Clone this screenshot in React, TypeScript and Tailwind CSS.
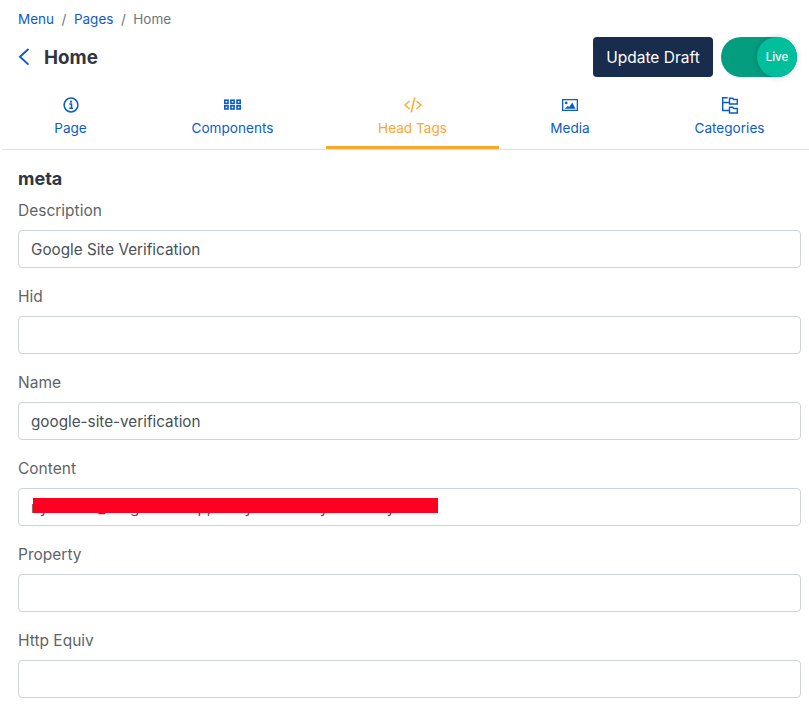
const blue = "text-[#0b5cc9]";

function BackIcon() {
  return (
    <svg className={blue} width="12" height="18" viewBox="0 0 12 18" fill="none" stroke="currentColor" strokeWidth="1.9">
      <path d="M10.5 1 2 8.8l8.5 7.8" />
    </svg>
  );
}

function InfoIcon() {
  return (
    <svg width="16" height="16" viewBox="0 0 16 16" fill="none" stroke="currentColor">
      <circle cx="8" cy="8" r="6.9" strokeWidth="1.5" />
      <circle cx="8" cy="4.7" r="1.1" fill="currentColor" stroke="none" />
      <path d="M6.3 7.1h2.2v4M6.3 11.3h3.8" strokeWidth="1.5" />
    </svg>
  );
}

function GridIcon() {
  const cells = [0.8, 6.9, 13].flatMap((x) => [3.2, 8.8].map((y) => [x, y]));
  return (
    <svg width="17" height="16" viewBox="0 0 17 16" fill="none" stroke="currentColor" strokeWidth="1.6">
      {cells.map(([x, y]) => (
        <rect key={`${x}-${y}`} x={x} y={y} width="3.2" height="3.2" />
      ))}
    </svg>
  );
}

function CodeIcon() {
  return (
    <svg width="18" height="16" viewBox="0 0 18 16" fill="none" stroke="currentColor" strokeWidth="1.5">
      <path d="M5.5 4 1 8l4.5 4M12.5 4 17 8l-4.5 4M10.8 0.5 7.2 15.5" />
    </svg>
  );
}

function ImageIcon() {
  return (
    <svg width="16" height="12" viewBox="0 0 16 12" fill="currentColor">
      <path fillRule="evenodd" d="M0 0h16v12H0zM1.3 1.3v9.4h13.4V1.3z" />
      <circle cx="4.2" cy="3.9" r="1.3" />
      <path d="M2.5 9.8 5.8 7l1.4 1L10.3 3.6l3.2 6.2z" />
    </svg>
  );
}

function FolderTreeIcon() {
  return (
    <svg width="17" height="17" viewBox="0 0 17 17" fill="none" stroke="currentColor" strokeWidth="1.4">
      <path d="M1.7 0v13.5H8M1.7 5.5H8M1.7 .7h5" />
      <path d="M8.5 7V1.2h3.2l1 1.3h3.6V7H8.5zM8.5 16V10.2h3.2l1 1.3h3.6V16H8.5z" />
    </svg>
  );
}

const tabs = [
  { label: "Page", icon: <InfoIcon />, width: "w-[141px]" },
  { label: "Components", icon: <GridIcon />, width: "w-[185px] pr-[2px]" },
  { label: "Head Tags", icon: <CodeIcon />, width: "w-[173px]", active: true },
  { label: "Media", icon: <ImageIcon />, width: "w-[142px]" },
  { label: "Categories", icon: <FolderTreeIcon />, width: "flex-1 pl-[9px]" },
];

const fields = [
  { label: "Description", value: "Google Site Verification" },
  { label: "Hid", value: "" },
  { label: "Name", value: "google-site-verification" },
  { label: "Content", value: "nyxxxxxx_xxxgxxxxxxxp,xxxxyxxxxxxxxyxxxxxxxy", redacted: true },
  { label: "Property", value: "" },
  { label: "Http Equiv", value: "" },
];

export default function App() {
  return (
    <div className="h-[712px] w-[809px] overflow-hidden bg-white font-['Inter',sans-serif]">
      <div className="px-[18px] pt-[10px]">
        <nav className="flex h-[18px] items-center text-[13.5px] leading-[18px] text-[#6c757d]">
          <span className={blue}>Menu</span>
          <span className="px-[7.5px]">/</span>
          <span className={blue}>Pages</span>
          <span className="px-[7.5px]">/</span>
          <span>Home</span>
        </nav>
        <div className="mt-[9px] flex h-[40px] items-center justify-between">
          <div className="flex items-center">
            <BackIcon />
            <h1 className="ml-[14px] pt-[2px] text-[18.8px] font-bold text-[#2f3542]">Home</h1>
          </div>
          <div className="-mr-[6px] flex items-center gap-[8px]">
            <button className="h-[40px] w-[120px] rounded-[4px] bg-[#182c4e] pt-[1px] text-[15.5px] text-white">
              Update Draft
            </button>
            <div className="relative h-[40px] w-[76px] rounded-full bg-[#059d80]">
              <span className="absolute right-0 top-0 flex h-[40px] w-[40px] items-center justify-center rounded-full bg-[#02bf9b] pt-[1px] text-[11.5px] font-medium text-white shadow-[0_0_6px_rgba(0,0,0,0.2)]">
                Live
              </span>
            </div>
          </div>
        </div>
      </div>

      <div className="ml-[2px] mt-[9px] border-b border-[#e2e2e2]">
        <div className="-ml-[2px] flex h-[63px]">
          {tabs.map((tab) => (
            <div
              key={tab.label}
              className={`flex flex-col items-center border-b-[3px] pt-[10px] text-[13.6px] ${tab.width} ${
                tab.active ? "border-[#ffa62b] text-[#ffa62b]" : `border-transparent ${blue}`
              }`}
            >
              <span className="flex h-[18px] items-center justify-center">{tab.icon}</span>
              <span className="mt-[6px] leading-[17px]">{tab.label}</span>
            </div>
          ))}
        </div>
      </div>

      <div className="pl-[18px] pr-[8px] pt-[17px]">
        <h2 className="text-[18px] font-bold leading-[24px] text-[#2f3542]">meta</h2>
        <div className="mt-[9px] flex flex-col gap-[18px]">
          {fields.map((field) => (
            <div key={field.label}>
              <label className="block pt-[1px] text-[15.5px] leading-[20px] text-[#5f6368]">{field.label}</label>
              <div className="relative mt-[9px]">
                <input
                  readOnly
                  value={field.value}
                  className="block h-[38px] w-full rounded-[4px] border border-[#ced4da] px-[12px] text-[15.25px] text-[#495057] outline-none"
                />
                {field.redacted && (
                  <div className="absolute left-[15px] top-[10px] h-[15px] w-[405px] bg-[#ff0022]" />
                )}
              </div>
            </div>
          ))}
        </div>
      </div>
    </div>
  );
}
